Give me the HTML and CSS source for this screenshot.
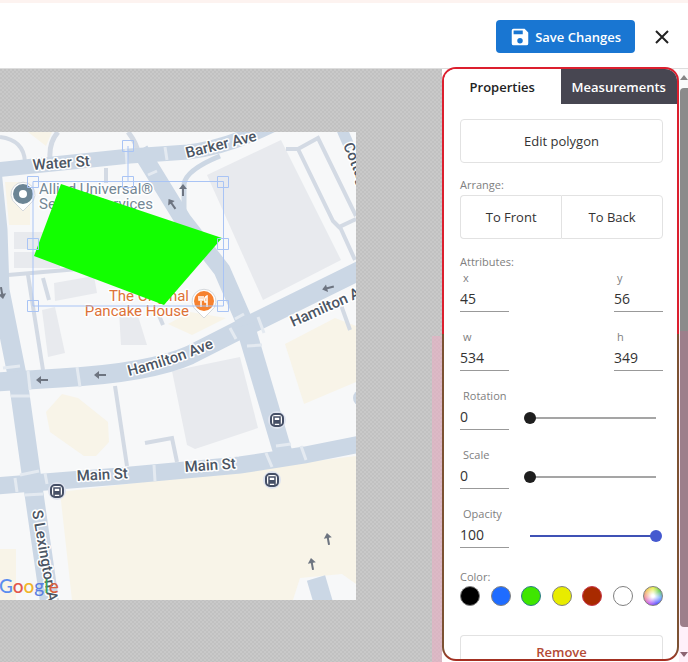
FILE: index.html
```html
<!DOCTYPE html>
<html lang="en">
<head>
  <meta charset="UTF-8">
  <meta name="viewport" content="width=device-width, initial-scale=1.0">
  <title>Map Editor</title>
  <link rel="stylesheet" href="styles.css">
</head>
<body>
  <header class="topbar">
    <button class="save-btn" type="button">
      <svg width="22" height="22" viewBox="0 0 24 24" fill="currentColor" aria-hidden="true">
        <path d="M17 3H5a2 2 0 0 0-2 2v14a2 2 0 0 0 2 2h14a2 2 0 0 0 2-2V7l-4-4zm-5 16a3 3 0 1 1 0-6 3 3 0 0 1 0 6zm3-10H5V5h10v4z"/>
      </svg>
      Save Changes
    </button>
    <button class="close-btn" type="button" aria-label="Close">
      <svg width="24" height="24" viewBox="0 0 24 24" fill="none" stroke="currentColor" stroke-width="2" aria-hidden="true">
        <path d="M6 6l12 12M18 6L6 18"/>
      </svg>
    </button>
  </header>

  <main class="editor">
    <section class="workspace">
      <svg class="map" viewBox="0 132 356 468" role="img" aria-label="Map">
        <defs>
          <g id="arrow" fill="none" stroke="#6d7480" stroke-width="2">
            <path d="M6 0H-3"/>
            <path d="M-6 0L-1 -4V4Z" fill="#6d7480" stroke="none"/>
          </g>
          <g id="bus">
            <circle r="9" fill="#dfe4ef"/>
            <rect x="-6" y="-6" width="12" height="12" rx="4" fill="#fff" stroke="#454f66" stroke-width="2"/>
            <path d="M-3 -3H3V3H-3ZM-3 3V5M3 3V5" fill="none" stroke="#454f66" stroke-width="1.5"/>
            <path d="M-3 0H3V3H-3Z" fill="#454f66"/>
          </g>
          <path id="pin" d="M0 17L-7 10A12 12 0 1 1 7 10Z" fill="#fff" stroke="#d4d8dc"/>
          <path id="hamilton" d="M129 376Q174 365 220 345"/>
        </defs>
        <rect y="132" width="356" height="468" fill="#f7f8f9"/>

        <!-- land -->
        <g fill="#f8f4e8">
          <path d="M60 492L356 456V600H72Z"/>
          <path d="M0 549H16V600H0Z"/>
          <path d="M62 394L78 398L108 422L109 442L96 456L84 456L50 432L46 412Z"/>
          <path d="M285 344L335 318L356 326V382L304 404Z"/>
          <path d="M5 182H30V225H9Z"/>
          <path d="M28 132H52L46 146Z"/>
          <path d="M168 324L190 312L226 318L192 335Z"/>
        </g>
        <path d="M300 578L342 574L356 584V600H293Z" fill="#f7f8f9"/>

        <!-- buildings -->
        <g fill="#e8eaee">
          <path d="M207 175L281 140L341 260L263 300Z"/>
          <path d="M172 371L240 357L258 428L195 449L187 445Z"/>
          <path d="M14 232H60V249H14ZM14 252H60V268H14Z"/>
          <path d="M54 283L94 276L97 293L55 301Z"/>
          <path d="M42 310L55 307L65 353L48 357Z"/>
          <path d="M119 312L138 316L147 345L121 345Z"/>
        </g>

        <!-- small streets -->
        <g fill="none" stroke="#d3dae4" stroke-width="4">
          <path d="M0 137Q24 140 25 162"/>
          <path d="M58 132Q49 142 50 158M128 132Q136 142 138 152" stroke-width="5"/>
          <path d="M8 275L90 268M28 275L43 370M43 278L49 300M106 168V183"/>
          <path d="M115 386L127 466M145 443L172 438L177 462M156 308L163 325"/>
          <path d="M220 156Q186 170 184 184V214" stroke="#ccd7e4" stroke-width="5"/>
          <path d="M286 149L298 149L318 138L356 216M298 149L333 221L339 227L356 219M340 227L355 260M341 305L350 330"/>
        </g>
        <circle cx="361" cy="398" r="8" fill="#ccd7e4"/>

        <!-- main streets -->
        <g fill="none" stroke="#cbd7e5" stroke-width="19">
          <path d="M-5 170L130 156L188 152Q230 147 280 121" stroke-width="15"/>
          <path d="M140 150L183 220L222 270L248 330" stroke-width="17"/>
          <path d="M-8 170L-2 230L0 290L18 380L32 480L50 605"/>
          <path d="M-5 382L60 378Q150 373 190 355L245 327L365 268"/>
          <path d="M245 325L285 460"/>
          <path d="M-5 486L120 476L240 465L305 455L360 444" stroke-width="17"/>
          <path d="M340 125L350 148" stroke-width="11"/>
          <path d="M316 578L324 605"/>
        </g>

        <!-- crossings -->
        <g stroke="#e4eaf1" stroke-width="3">
          <path d="M126 149L127 164M165 147L167 160M148 175L157 171M3 368L20 366M28 371L30 390M11 396L30 396M77 367L80 387M235 319L244 314M230 328L236 339M258 317L264 333M247 346L262 345M20 475L39 471M25 495L43 494M15 478L17 492M45 473L47 484M154 465L155 481M266 453L272 467M276 446L291 444M301 446L306 460"/>
        </g>

        <!-- one way arrows -->
        <use href="#arrow" transform="translate(42 380)"/>
        <use href="#arrow" transform="translate(100 375)"/>
        <use href="#arrow" transform="translate(328 288) rotate(-15)"/>
        <use href="#arrow" transform="translate(172 204) rotate(55)"/>
        <use href="#arrow" transform="translate(183 190) rotate(90)"/>
        <use href="#arrow" transform="translate(2 293) rotate(-100)"/>
        <use href="#arrow" transform="translate(312 564) rotate(80)"/>
        <use href="#arrow" transform="translate(328 539) rotate(80)"/>

        <use href="#bus" transform="translate(277 420)"/>
        <use href="#bus" transform="translate(272 480)"/>
        <use href="#bus" transform="translate(57 491)"/>

        <g class="street-name">
          <text transform="translate(33 170) rotate(-4)">Water St</text>
          <text transform="translate(187 158) rotate(-14)">Barker Ave</text>
          <text><textPath href="#hamilton">Hamilton Ave</textPath></text>
          <text transform="translate(293 327) rotate(-24)">Hamilton Ave</text>
          <text transform="translate(343 145) rotate(68)">Cottage Pl</text>
          <text transform="translate(77 481) rotate(-3)">Main St</text>
          <text transform="translate(185 472) rotate(-4)">Main St</text>
          <text transform="translate(32 511) rotate(80)">S Lexington Ave</text>
        </g>

        <g class="place-name">
          <text x="39" y="194">Allied Universal®</text>
          <text x="39" y="209">Security Services</text>
        </g>
        <g class="place-name food">
          <text x="189" y="301">The Original</text>
          <text x="189" y="316">Pancake House</text>
        </g>

        <!-- pins -->
        <use href="#pin" transform="translate(23 194)"/>
        <circle cx="23" cy="194" r="7" fill="#fff" stroke="#6c8595" stroke-width="6"/>
        <use href="#pin" transform="translate(204 301)"/>
        <circle cx="204" cy="301" r="10" fill="#f6812f"/>
        <path d="M201 301V307M199 296V300H203V296M201 296V300M207 307V296Q204 297 205 302H207" fill="none" stroke="#fff" stroke-width="1.5"/>

        <text class="google" x="-1" y="593"><tspan fill="#5b8def">G</tspan><tspan fill="#e2574c">o</tspan><tspan fill="#f0b429">o</tspan><tspan fill="#5b7fe0">g</tspan><tspan fill="#3fa35a">l</tspan><tspan fill="#d9603b">e</tspan></text>

        <!-- selected polygon -->
        <path d="M61 184L222 238L164 305L34 256Z" fill="#12ff00"/>
        <g fill="none" stroke="#a9c4f5">
          <path d="M33 181.5H223.5V306H33ZM128 181V146"/>
          <path d="M27.5 176.5h11v11h-11ZM122.5 176.5h11v11h-11ZM217.5 176.5h11v11h-11ZM27.5 238.5h11v11h-11ZM217.5 238.5h11v11h-11ZM27.5 300.5h11v11h-11ZM217.5 300.5h11v11h-11ZM122.5 140.5h11v11h-11Z"/>
        </g>
      </svg>
    </section>

    <aside class="panel">
      <div class="tabs" role="tablist">
        <button class="tab active" type="button" role="tab" aria-selected="true">Properties</button>
        <button class="tab" type="button" role="tab" aria-selected="false">Measurements</button>
      </div>
      <form class="props">
        <button class="btn" type="button">Edit polygon</button>

        <div class="caption">Arrange:</div>
        <div class="btn-group">
          <button class="btn" type="button">To Front</button>
          <button class="btn" type="button">To Back</button>
        </div>

        <div class="caption">Attributes:</div>
        <div class="fields">
          <div class="row">
            <div class="field"><label for="x">x</label><input id="x" type="text" value="45"></div>
            <div class="field"><label for="y">y</label><input id="y" type="text" value="56"></div>
          </div>
          <div class="row">
            <div class="field"><label for="w">w</label><input id="w" type="text" value="534"></div>
            <div class="field"><label for="h">h</label><input id="h" type="text" value="349"></div>
          </div>
          <div class="row">
            <div class="field"><label for="rotation">Rotation</label><input id="rotation" type="text" value="0"></div>
            <input class="slider" type="range" min="0" max="360" value="0" aria-label="Rotation">
          </div>
          <div class="row">
            <div class="field"><label for="scale">Scale</label><input id="scale" type="text" value="0"></div>
            <input class="slider" type="range" min="0" max="100" value="0" aria-label="Scale">
          </div>
          <div class="row">
            <div class="field"><label for="opacity">Opacity</label><input id="opacity" type="text" value="100"></div>
            <input class="slider full" type="range" min="0" max="100" value="100" aria-label="Opacity">
          </div>
        </div>

        <div class="caption color-caption">Color:</div>
        <div class="colors">
          <input class="swatch black" type="radio" name="color" aria-label="Black">
          <input class="swatch blue" type="radio" name="color" aria-label="Blue">
          <input class="swatch green" type="radio" name="color" aria-label="Green" checked>
          <input class="swatch yellow" type="radio" name="color" aria-label="Yellow">
          <input class="swatch red" type="radio" name="color" aria-label="Red">
          <input class="swatch white" type="radio" name="color" aria-label="White">
          <input class="swatch custom" type="radio" name="color" aria-label="Custom color">
        </div>

        <button class="btn remove" type="button">Remove</button>
      </form>
    </aside>

    <div class="scrollbar" aria-hidden="true">
      <span class="arrow-up"></span>
      <span class="thumb"></span>
      <span class="arrow-down"></span>
    </div>
  </main>
</body>
</html>
```
FILE: styles.css
```css
* {
  box-sizing: border-box;
}
body {
  display: flex;
  flex-direction: column;
  height: 100vh;
  margin: 0;
  overflow: hidden;
  background: #fff;
  color: #333;
  font-family: "Open Sans", "Noto Sans", sans-serif;
  font-size: 13px;
}
button,
input {
  margin: 0;
  font-family: inherit;
  font-size: inherit;
  color: inherit;
}
button {
  cursor: pointer;
}

/* top bar */
.topbar {
  display: flex;
  flex: none;
  align-items: center;
  justify-content: flex-end;
  gap: 15px;
  height: 69px;
  padding: 2px 14px 0 0;
  border-top: 3px solid #fdf3f0;
  border-bottom: 1px solid #ddd;
}
.save-btn {
  display: flex;
  align-items: center;
  gap: 4px;
  height: 33px;
  padding: 0 14px 0 13px;
  border: none;
  border-radius: 4px;
  background: #1976d2;
  color: #fff;
  font-weight: 600;
}
.close-btn {
  display: flex;
  padding: 0;
  border: none;
  background: none;
  color: #222;
}

/* workspace */
.editor {
  display: flex;
  flex: 1;
  min-height: 0;
}
.workspace {
  flex: 1;
  min-width: 0;
  padding: 63px 86px 0 0;
  background:
    linear-gradient(transparent 45%, rgba(240, 170, 195, 0.5) 45%) right / 10px 100% no-repeat,
    repeating-conic-gradient(#c9c9c9 0 25%, #c1c1c1 0 50%) 0 0 / 4px 4px;
}
.map {
  display: block;
  width: 100%;
}
.street-name,
.place-name {
  font-family: Roboto, sans-serif;
  font-size: 15px;
  paint-order: stroke;
  stroke: #fff;
  stroke-width: 3px;
  stroke-linejoin: round;
}
.street-name {
  fill: #4b5563;
  font-weight: 500;
}
.place-name {
  fill: #748794;
}
.food {
  fill: #dd7238;
  text-anchor: end;
}
.google {
  font-family: Lato, sans-serif;
  font-size: 19px;
  font-weight: 500;
}

/* side panel */
.panel {
  flex: none;
  width: 237px;
  margin: -2px 0 1px;
  overflow: hidden;
  border: 2px solid transparent;
  border-radius: 14px;
  background:
    linear-gradient(#fff, #fff) padding-box,
    linear-gradient(#dc1f2e 45%, #7c5233 45%, #7c5233 98%, #a82c20) border-box;
}
.tabs {
  display: flex;
}
.tab {
  flex: 1;
  height: 35px;
  padding: 0;
  border: none;
  background: #474651;
  color: #fff;
  font-weight: 600;
}
.tab.active {
  background: #fff;
  color: #222;
}
.props {
  padding: 15px 14px 0 16px;
}
.btn {
  width: 100%;
  height: 44px;
  padding: 0;
  border: 1px solid #e2e2e2;
  border-radius: 4px;
  background: #fff;
}
.btn-group {
  display: flex;
  margin: 2px 0 15px;
}
.btn-group .btn:first-child {
  border-right: none;
  border-radius: 4px 0 0 4px;
}
.btn-group .btn:last-child {
  border-radius: 0 4px 4px 0;
}
.caption {
  margin-top: 14px;
  color: #808080;
  font-size: 11px;
  line-height: 16px;
}
.btn-group + .caption {
  margin-top: 0;
}
.color-caption {
  margin-top: 21px;
}
.fields {
  display: flex;
  flex-direction: column;
  gap: 17px;
}
.row {
  display: flex;
  align-items: flex-end;
  justify-content: space-between;
}
.field {
  display: flex;
  flex-direction: column;
  width: 49px;
}
.field label {
  padding-left: 3px;
  color: #808080;
  font-size: 11px;
  line-height: 16px;
}
.field input {
  width: 100%;
  height: 26px;
  padding: 0;
  border: none;
  border-bottom: 1px solid #999;
  background: none;
  font-size: 14px;
}
.slider {
  flex: 1;
  height: 12px;
  margin: 0 1px 6px 15px;
  appearance: none;
  background: linear-gradient(#a5a5a5, #a5a5a5) center / calc(100% - 12px) 2px no-repeat;
}
.slider::-webkit-slider-thumb {
  width: 12px;
  height: 12px;
  appearance: none;
  border-radius: 50%;
  background: #1e1e1e;
}
.slider.full {
  background-image: linear-gradient(#3f51b5, #3f51b5);
}
.slider.full::-webkit-slider-thumb {
  background: #4559cf;
}
.colors {
  display: flex;
  justify-content: space-between;
  margin-top: 1px;
}
.swatch {
  width: 20px;
  height: 20px;
  appearance: none;
  border: 1px solid #808080;
  border-radius: 50%;
}
.black { background: #000; }
.blue { background: #1f6cff; }
.green { background: #3fe600; }
.green:checked { border-color: #2c7c86; }
.yellow { background: #e8ec00; }
.red { background: #a82a00; border-color: #c8374a; }
.white { background: #fff; }
.custom {
  background:
    radial-gradient(#fff 10%, transparent 70%),
    conic-gradient(#e8f04a, #62c94f, #6ba4ff, #5a4fff, #c25cf0, #f08a9a, #f0c060, #e8f04a);
}
.remove {
  height: 32px;
  margin-top: 29px;
  border-bottom: none;
  border-radius: 4px 4px 0 0;
  color: #b34a35;
  font-weight: 600;
}

/* scrollbar */
.scrollbar {
  display: flex;
  flex: none;
  flex-direction: column;
  align-items: center;
  gap: 8px;
  width: 9px;
  padding: 6px 0 5px 1px;
  background: linear-gradient(#fafafa 45%, #fff0fa 45%);
}
.thumb {
  flex: 1;
  width: 100%;
  margin-bottom: 17px;
  border-radius: 4px 0 0 4px;
  background: linear-gradient(#8b8b8b 45%, #9d7f8b 45%);
}
.arrow-up,
.arrow-down {
  border: 4px solid transparent;
}
.arrow-up {
  border-top: none;
  border-bottom: 5px solid #858585;
}
.arrow-down {
  border-bottom: none;
  border-top: 5px solid #8c6472;
}
```
